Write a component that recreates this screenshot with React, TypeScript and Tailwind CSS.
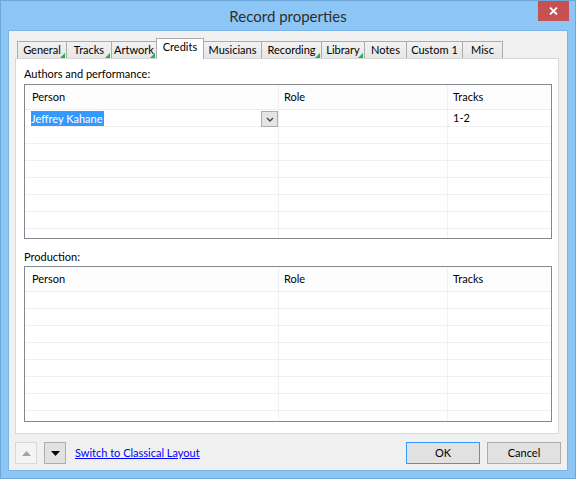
import React from "react";

const tabs = [
  { name: "General", w: "w-[50px]", mark: true },
  { name: "Tracks", w: "w-[46px]", mark: true },
  { name: "Artwork", w: "w-[46px]", mark: true },
  { name: "Credits", w: "w-[48px]", sel: true },
  { name: "Musicians", w: "w-[59px]" },
  { name: "Recording", w: "w-[61px]", mark: true },
  { name: "Library", w: "w-[44px]", mark: true },
  { name: "Notes", w: "w-[43px]" },
  { name: "Custom 1", w: "w-[57px]" },
  { name: "Misc", w: "w-[41px]" },
];

function Mark() {
  return (
    <svg className="absolute right-[1px] bottom-[0px]" width="5" height="5" viewBox="0 0 5 5">
      <polygon points="5,0 5,5 0,5" fill="#22b14c" />
    </svg>
  );
}

function Grid({ height, rows, first }: { height: string; rows: number; first?: boolean }) {
  return (
    <div className={`${height} border border-[#828790] bg-white overflow-hidden`}>
      <div className="w-[526px]">
        <div className="flex h-[25px] border-b border-[#e5eef9] bg-[#fdfdfe]">
          <div className="w-[254px] border-r border-[#eef2f8] pl-[7px] flex items-center">Person</div>
          <div className="w-[169px] border-r border-[#eef2f8] pl-[5px] flex items-center">Role</div>
          <div className="w-[102px] pl-[5px] flex items-center">Tracks</div>
        </div>
        {Array.from({ length: rows }).map((_, i) => (
          <div key={i} className="flex h-[17px] border-b border-[#f0f0f0]">
            <div className="w-[254px] border-r border-[#f0f0f0] relative flex items-center">
              {first && i === 0 && (
                <>
                  <span className="ml-[6px] bg-[#3399ff] text-white leading-[15px] pr-[1px] border-r border-[#e07020]">
                    Jeffrey Kahane
                  </span>
                  <span className="absolute right-0 top-[1px] w-[17px] h-[16px] bg-[#e5e5e5] border border-[#acacac] flex items-center justify-center">
                    <svg width="8" height="5" viewBox="0 0 8 5">
                      <polyline points="1,1 4,4 7,1" fill="none" stroke="#444" strokeWidth="1.4" />
                    </svg>
                  </span>
                </>
              )}
            </div>
            <div className="w-[169px] border-r border-[#f0f0f0]"></div>
            <div className="w-[102px] pl-[5px] flex items-center">{first && i === 0 ? "1-2" : ""}</div>
          </div>
        ))}
      </div>
    </div>
  );
}

export default function App() {
  return (
    <div
      className="w-[576px] h-[479px] bg-[#8bc6f7] border border-[#6fa6da] flex flex-col text-[11px] text-black"
      style={{ fontFamily: "Lato, 'Noto Sans', sans-serif" }}
    >
      <div className="h-[29px] relative flex items-center justify-center">
        <span className="text-[15px] text-[#2e2e2e] mt-[1px]">Record properties</span>
        <div className="absolute right-[6px] top-0 w-[31px] h-[20px] bg-[#c75050] flex items-center justify-center">
          <svg width="9" height="8" viewBox="0 0 9 8">
            <path d="M1 0.5 L8 7.5 M8 0.5 L1 7.5" stroke="#fff" strokeWidth="1.8" />
          </svg>
        </div>
      </div>
      <div className="mx-[7px] mb-[7px] flex-1 bg-[#f0f0f0] border border-[#7cb3e6] flex flex-col">
        <div className="flex items-end h-[20px] mt-[7px] pl-[8px]">
          {tabs.map((t, i) =>
            t.sel ? (
              <div
                key={t.name}
                className={`${t.w} h-[21px] -mb-px ${i ? "-ml-px" : ""} relative z-10 bg-white border-t border-l border-r border-[#acacac] flex items-center justify-center pb-[3px]`}
              >
                {t.name}
              </div>
            ) : (
              <div
                key={t.name}
                className={`${t.w} h-[17px] ${i ? "-ml-px" : ""} relative bg-gradient-to-b from-[#f2f2f2] to-[#e6e6e6] border-t border-l border-r border-[#acacac] flex items-center justify-center`}
              >
                {t.name}
                {t.mark && <Mark />}
              </div>
            )
          )}
        </div>
        <div className="ml-[6px] mr-[8px] h-[376px] bg-white border border-[#d9d9d9] flex flex-col pl-[8px] pr-[6px]">
          <div className="mt-[7px] leading-[15px]">Authors and performance:</div>
          <div className="mt-[3px]">
            <Grid height="h-[155px]" rows={8} first />
          </div>
          <div className="mt-[10px] leading-[15px]">Production:</div>
          <div className="mt-[2px]">
            <Grid height="h-[156px]" rows={8} />
          </div>
        </div>
        <div className="flex items-center mt-[8px] pl-[6px] pr-[6px]">
          <div className="w-[22px] h-[22px] border border-[#d9d9d9] bg-[#f4f4f4] flex items-center justify-center">
            <svg width="9" height="5" viewBox="0 0 9 5">
              <polygon points="0,5 9,5 4.5,0" fill="#a3a3a3" />
            </svg>
          </div>
          <div className="w-[22px] h-[22px] ml-[7px] border border-[#adadad] bg-[#e1e1e1] flex items-center justify-center">
            <svg width="9" height="5" viewBox="0 0 9 5">
              <polygon points="0,0 9,0 4.5,5" fill="#000" />
            </svg>
          </div>
          <span className="ml-[9px] text-[#0000ff] underline">Switch to Classical Layout</span>
          <div className="flex-1" />
          <div className="w-[74px] h-[22px] border border-[#3399ff] bg-[#e1e1e1] flex items-center justify-center">OK</div>
          <div className="w-[74px] h-[22px] ml-[7px] border border-[#adadad] bg-[#e1e1e1] flex items-center justify-center">Cancel</div>
        </div>
      </div>
    </div>
  );
}
